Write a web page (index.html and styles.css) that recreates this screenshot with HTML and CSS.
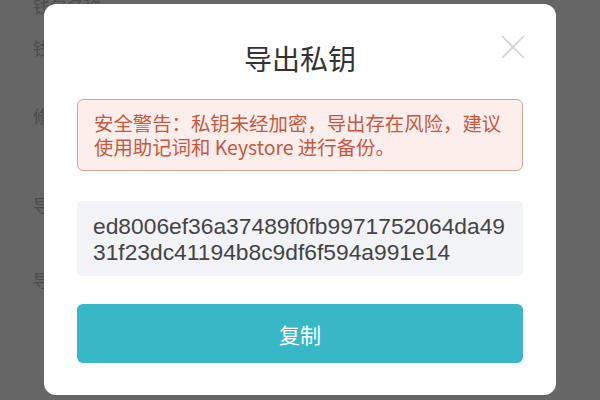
FILE: index.html
```html
<!DOCTYPE html>
<html lang="zh-CN">

<head>
    <meta charset="UTF-8">
    <meta name="viewport" content="width=device-width, initial-scale=1.0">
    <title>导出私钥</title>

    <link rel="stylesheet" href="styles.css">
</head>

<body>
    <ul class="settings">
        <li class="row row-first">钱包名称</li>
        <li class="row row-second">钱包地址</li>
        <li class="row row-third">修改密码</li>
        <li class="row row-fourth">导出私钥</li>
        <li class="row">导出 Keystore</li>
    </ul>

    <div class="mask">
        <div class="dialog">
            <span class="close" aria-label="关闭">
                <svg width="24" height="24" viewBox="0 0 24 24">
                    <path d="M1 1L23 23M23 1L1 23" stroke="#d2d2d2" stroke-width="1.6" fill="none" />
                </svg>
            </span>

            <h1 class="title">导出私钥</h1>

            <div class="warning">
                安全警告：私钥未经加密，导出存在风险，建议使用助记词和 Keystore 进行备份。
            </div>

            <div class="key">ed8006ef36a37489f0fb9971752064da4931f23dc41194b8c9df6f594a991e14</div>

            <button type="button" class="copy">复制</button>
        </div>
    </div>
</body>

</html>
```

FILE: styles.css
```css
body {
    margin: 0;
    width: 600px;
    height: 400px;
    overflow: hidden;
    background-color: #ffffff;
    font-family: "Liberation Sans", "Noto Sans CJK SC", sans-serif;
}

.settings {
    margin: 0;
    padding: 0 0 0 33px;
    list-style: none;
    display: flex;
    flex-direction: column;
}

.row {
    font-family: "Noto Sans CJK SC", sans-serif;
    font-size: 17px;
    line-height: 24px;
    color: #bdbdbd;
    white-space: nowrap;
}

.row-first {
    margin-top: -6px;
    margin-bottom: 18px;
}

.row-second {
    margin-bottom: 44px;
}

.row-third {
    margin-bottom: 65px;
}

.row-fourth {
    margin-bottom: 51px;
}

.mask {
    position: fixed;
    top: 0;
    left: 0;
    right: 0;
    bottom: 0;
    background-color: rgba(0, 0, 0, 0.6);
    display: flex;
    justify-content: center;
    align-items: flex-start;
    padding-top: 4px;
}

.dialog {
    position: relative;
    width: 512px;
    height: 391px;
    box-sizing: border-box;
    padding: 34px 33px 32px;
    background-color: #ffffff;
    border-radius: 12px;
    display: flex;
    flex-direction: column;
}

.close {
    position: absolute;
    top: 31px;
    right: 31px;
    width: 24px;
    height: 24px;
}

.close svg {
    display: block;
}

.title {
    margin: 0;
    font-family: "Noto Sans CJK SC", sans-serif;
    font-size: 28px;
    font-weight: 400;
    line-height: 40px;
    color: #333333;
    text-align: center;
}

.warning {
    margin-top: 21px;
    padding: 11px 12px 11px 16px;
    border: 1px solid #cfa79c;
    border-radius: 6px;
    background-color: #fcefeb;
    color: #c9573f;
    font-family: "Noto Sans CJK SC", sans-serif;
    font-size: 19.4px;
    line-height: 24px;
}

.key {
    margin-top: 30px;
    padding: 12px 12px 11px 16px;
    border-radius: 5px;
    background-color: #f1f3f6;
    color: #444444;
    font-family: "Liberation Sans", "Noto Sans CJK SC", sans-serif;
    font-size: 22.8px;
    line-height: 26px;
    word-break: break-all;
}

.copy {
    margin-top: 28px;
    height: 60px;
    border: none;
    border-radius: 6px;
    background-color: #38b8c7;
    color: #ffffff;
    font-family: "Noto Sans CJK SC", sans-serif;
    font-size: 21px;
}
```
